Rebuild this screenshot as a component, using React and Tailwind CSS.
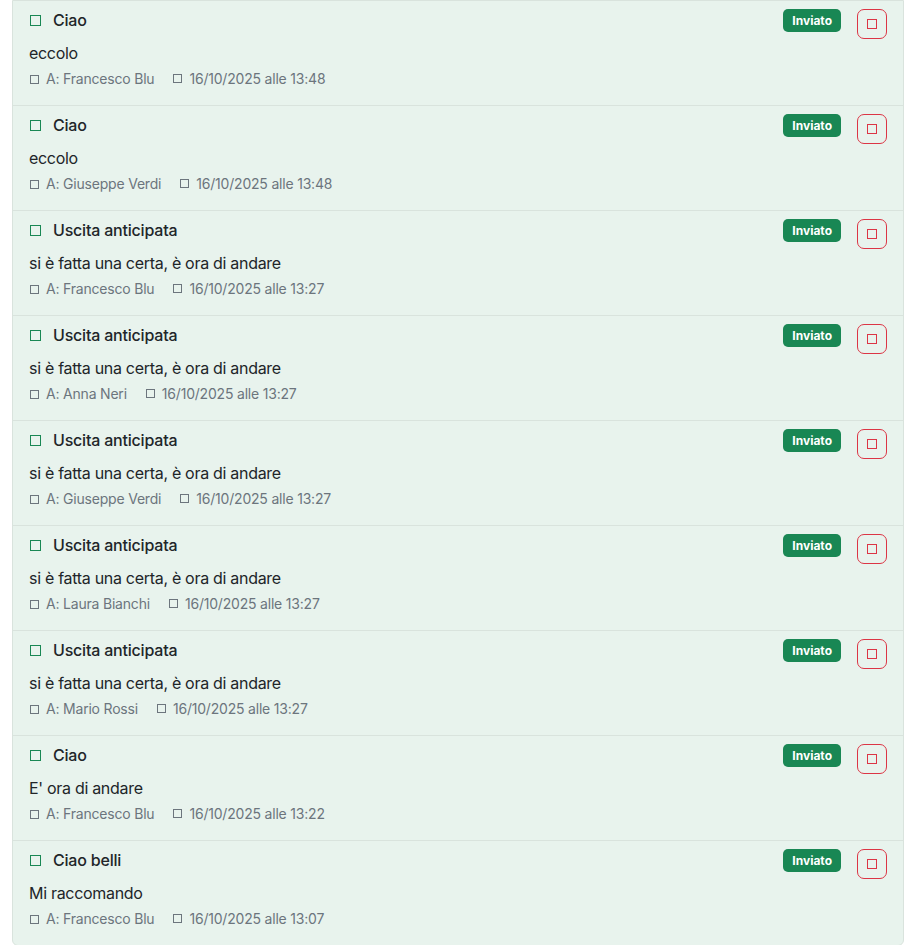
import React from "react";

const items = [
  { t: "Ciao", b: "eccolo", to: "Francesco Blu", d: "16/10/2025 alle 13:48" },
  { t: "Ciao", b: "eccolo", to: "Giuseppe Verdi", d: "16/10/2025 alle 13:48" },
  { t: "Uscita anticipata", b: "si è fatta una certa, è ora di andare", to: "Francesco Blu", d: "16/10/2025 alle 13:27" },
  { t: "Uscita anticipata", b: "si è fatta una certa, è ora di andare", to: "Anna Neri", d: "16/10/2025 alle 13:27" },
  { t: "Uscita anticipata", b: "si è fatta una certa, è ora di andare", to: "Giuseppe Verdi", d: "16/10/2025 alle 13:27" },
  { t: "Uscita anticipata", b: "si è fatta una certa, è ora di andare", to: "Laura Bianchi", d: "16/10/2025 alle 13:27" },
  { t: "Uscita anticipata", b: "si è fatta una certa, è ora di andare", to: "Mario Rossi", d: "16/10/2025 alle 13:27" },
  { t: "Ciao", b: "E' ora di andare", to: "Francesco Blu", d: "16/10/2025 alle 13:22" },
  { t: "Ciao belli", b: "Mi raccomando", to: "Francesco Blu", d: "16/10/2025 alle 13:07" },
];

function MetaBox() {
  return <span className="inline-block w-[9px] h-[9px] border border-[#6c757d] mr-[7px] shrink-0" />;
}

export default function App() {
  return (
    <div className="w-[916px] h-[945px] bg-white" style={{ fontFamily: "Inter, 'Noto Sans', sans-serif" }}>
      <div className="ml-[12px] w-[892px] border border-[#d9e3dd] rounded-b-[6px] bg-[#e8f3ed] overflow-hidden">
        {items.map((it, i) => (
          <div
            key={i}
            className={`flex pl-[16px] pr-[16px] pt-[7px] pb-[16px] ${i < items.length - 1 ? "border-b border-[#d9e3dd]" : ""}`}
          >
            <div className="flex-1 min-w-0">
              <div className="flex items-center h-[24px]">
                <span className="inline-block w-[11px] h-[11px] border-[1.5px] border-[#198754] ml-[1px] mr-[12px]" />
                <span className="text-[16px] font-medium text-[#212529] tracking-[-0.2px]">{it.t}</span>
              </div>
              <div className="mt-[9px] text-[16px] leading-[24px] text-[#212529] tracking-[-0.3px]">{it.b}</div>
              <div className="mt-[3px] flex items-center text-[14px] leading-[21px] text-[#6c757d] tracking-[-0.2px]">
                <span className="flex items-center mr-[19px]">
                  <span className="ml-[1px]"><MetaBox /></span>
                  A: {it.to}
                </span>
                <span className="flex items-center">
                  <MetaBox />
                  {it.d}
                </span>
              </div>
            </div>
            <div className="flex items-start gap-[16px] pt-[1px]">
              <span className="h-[23px] px-[9px] rounded-[5px] bg-[#198754] text-white text-[12px] font-bold flex items-center leading-none">
                Inviato
              </span>
              <button className="w-[30px] h-[30px] rounded-[7px] border border-[#dc3545] flex items-center justify-center bg-transparent">
                <span className="inline-block w-[10px] h-[10px] border-[1.5px] border-[#dc3545]" />
              </button>
            </div>
          </div>
        ))}
      </div>
    </div>
  );
}
